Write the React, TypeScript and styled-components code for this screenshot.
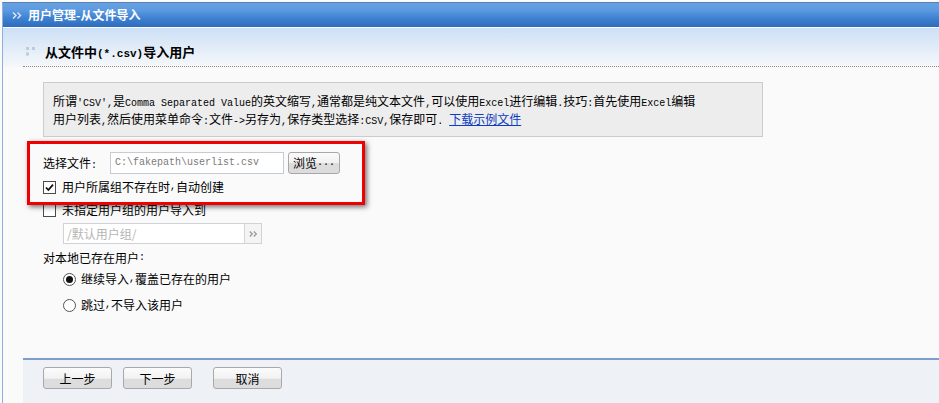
import React from "react";
import styled, { createGlobalStyle } from "styled-components";

const Global = createGlobalStyle`
  html, body { margin: 0; padding: 0; background: #fafafa; }
  body {
    font-family: "Noto Sans CJK SC", "Noto Sans", sans-serif;
    font-size: 12px;
    color: #000;
  }
  #root { height: 403px; }
`;

const Page = styled.div`
  height: 403px;
  box-sizing: border-box;
  padding: 2px 0 0 2px;
  display: flex;
  overflow: hidden;
  background: #fafafa;
`;

const Window = styled.div`
  flex: 1;
  min-width: 0;
  display: flex;
  flex-direction: column;
  border-left: 1px solid #8db0dc;
  border-top: 1px solid #5f7fa8;
`;

const Header = styled.div`
  height: 24px;
  flex: none;
  display: flex;
  align-items: center;
  gap: 6px;
  padding-left: 9px;
  background: linear-gradient(#64a2e4 0%, #5d9ae0 30%, #4a8bd7 50%, #3d80cf 65%, #2e6bbe 100%);
  border-bottom: 1px solid #ffffff;
  color: #fff;
  font-weight: bold;
  font-size: 12px;
  line-height: 16px;
`;

const TitleBand = styled.div`
  flex: none;
  background: linear-gradient(#cde0f6 0%, #e3edf8 55%, #f6f8fa 100%);
`;

const TitleInner = styled.div`
  margin-left: 20px;
  height: 38px;
  box-sizing: content-box;
  border-bottom: 1px dotted #8a8a8a;
  display: flex;
  align-items: flex-end;
  gap: 9px;
  padding: 0 0 0 3px;
`;

const TitleText = styled.div`
  font-weight: bold;
  font-size: 13px;
  line-height: 16px;
  margin-bottom: 6px;
  color: #000;
`;

const TitleIcon = styled.svg`
  flex: none;
  margin-bottom: 10px;
`;

const Content = styled.div`
  flex: 1;
  padding-left: 40px;
  display: flex;
  flex-direction: column;
`;

const InfoBox = styled.div`
  margin-top: 15px;
  width: 720px;
  box-sizing: border-box;
  border: 1px solid #cccccc;
  background: #ededed;
  padding: 9px 9px 8px 9px;
  line-height: 18px;
  color: #000;
`;

const InfoLine = styled.div`
  height: 18px;
  white-space: nowrap;
`;

const Link = styled.a`
  color: #0b3cc1;
  text-decoration: underline;
  cursor: pointer;
`;

const Latin = styled.span<{ $size?: number }>`
  font-family: "Liberation Mono", "DejaVu Sans Mono", monospace;
  font-size: ${(p) => p.$size ?? 10}px;
  line-height: 1;
`;

function Mixed({ text, size }: { text: string; size?: number }) {
  const parts = text.split(/([\x20-\x7e]+)/);
  return (
    <>
      {parts.map((p, i) =>
        p === "" ? null : /^[\x20-\x7e]+$/.test(p) ? (
          <Latin key={i} $size={size}>
            {p}
          </Latin>
        ) : (
          <React.Fragment key={i}>{p}</React.Fragment>
        )
      )}
    </>
  );
}

const Form = styled.div`
  position: relative;
  display: flex;
  flex-direction: column;
`;

const Row = styled.div<{ $top: number; $h: number; $indent?: number }>`
  display: flex;
  align-items: center;
  margin-top: ${(p) => p.$top}px;
  height: ${(p) => p.$h}px;
  padding-left: ${(p) => p.$indent ?? 0}px;
  line-height: 18px;
  white-space: nowrap;
`;

const Label = styled.span`
  width: 67px;
  flex: none;
`;

const FileInput = styled.div`
  width: 174px;
  height: 22px;
  box-sizing: border-box;
  border: 1px solid #c6ccd3;
  background: #fff;
  padding-left: 4px;
  display: flex;
  align-items: center;
  color: #7a7a7a;
`;

const SmallButton = styled.div`
  margin-left: 4px;
  width: 52px;
  height: 22px;
  box-sizing: border-box;
  border: 1px solid #a8a8a8;
  border-radius: 3px;
  background: linear-gradient(#fbfbfb 0%, #f1f1f1 50%, #dcdcdc 52%, #dcdcdc 100%);
  display: flex;
  align-items: center;
  justify-content: center;
  color: #000;
`;

const CheckBox = styled.span`
  width: 13px;
  height: 13px;
  box-sizing: border-box;
  border: 1px solid #4a4a4a;
  background: #fff;
  flex: none;
  display: flex;
  align-items: center;
  justify-content: center;
  margin-right: 6px;
`;

const Radio = styled.span`
  width: 13px;
  height: 13px;
  box-sizing: border-box;
  border: 1px solid #555;
  border-radius: 50%;
  background: #fff;
  flex: none;
  display: flex;
  align-items: center;
  justify-content: center;
  margin-right: 5px;
`;

const RadioDot = styled.span`
  width: 7px;
  height: 7px;
  border-radius: 50%;
  background: #111;
`;

const GroupInput = styled.div`
  margin-left: 20px;
  width: 199px;
  height: 21px;
  box-sizing: border-box;
  border: 1px solid #cfd3d8;
  background: #fff;
  display: flex;
  align-items: stretch;
`;

const GroupText = styled.span`
  flex: 1;
  padding-left: 3px;
  display: flex;
  align-items: center;
  color: #b5b5b5;
`;

const GroupPick = styled.span`
  width: 16px;
  border-left: 1px solid #d4d4d4;
  background: #f4f4f4;
  display: flex;
  align-items: center;
  justify-content: center;
`;

const Highlight = styled.div`
  position: absolute;
  left: -16px;
  top: 4px;
  width: 338px;
  height: 64px;
  box-sizing: border-box;
  border: 3px solid #f00000;
  box-shadow: 2px 2px 5px rgba(0, 0, 0, 0.55);
  pointer-events: none;
  z-index: 2;
`;

const Footer = styled.div`
  flex: none;
  margin-left: 20px;
  height: 36px;
  border-top: 2px solid #7e9ccc;
  background: #eef2f7;
  padding: 7px 0 0 20px;
  box-sizing: content-box;
  display: flex;
  align-items: flex-start;
`;

const FooterButton = styled.div<{ $gap: number }>`
  margin-left: ${(p) => p.$gap}px;
  width: 69px;
  height: 22px;
  box-sizing: border-box;
  border: 1px solid #a9a9a9;
  border-radius: 3px;
  background: linear-gradient(#fbfbfb 0%, #f2f2f2 52%, #dddddd 54%, #dddddd 100%);
  display: flex;
  align-items: center;
  justify-content: center;
  color: #000;
  font-size: 12px;
`;

const HeaderArrows = () => (
  <svg width="10" height="7" viewBox="0 0 10 7">
    <path d="M1 0.5 L4 3.5 L1 6.5" fill="none" stroke="#dce9f8" strokeWidth="1.4" />
    <path d="M5.5 0.5 L8.5 3.5 L5.5 6.5" fill="none" stroke="#dce9f8" strokeWidth="1.4" />
  </svg>
);

const PickArrows = () => (
  <svg width="9" height="6" viewBox="0 0 9 6">
    <path d="M0.8 0.5 L3.3 3 L0.8 5.5" fill="none" stroke="#9a9a9a" strokeWidth="1.3" />
    <path d="M4.8 0.5 L7.3 3 L4.8 5.5" fill="none" stroke="#9a9a9a" strokeWidth="1.3" />
  </svg>
);

const Check = () => (
  <svg width="11" height="11" viewBox="0 0 11 11">
    <path d="M2 5.5 L4.4 8 L9 2.6" fill="none" stroke="#111" strokeWidth="1.8" />
  </svg>
);

export default function App() {
  return (
    <>
      <Global />
      <Page>
        <Window>
          <Header>
            <HeaderArrows />
            <span>用户管理-从文件导入</span>
          </Header>
          <TitleBand>
            <TitleInner>
              <TitleIcon width="10" height="9" viewBox="0 0 10 9">
                <rect x="0" y="0" width="3" height="3" fill="#bccbde" />
                <rect x="6" y="0" width="3" height="3" fill="#bccbde" />
                <rect x="0" y="5.5" width="3" height="3" fill="#bccbde" />
              </TitleIcon>
              <TitleText>
                <Mixed text="从文件中(*.csv)导入用户" size={11} />
              </TitleText>
            </TitleInner>
          </TitleBand>
          <Content>
            <InfoBox>
              <InfoLine>
                <Mixed text="所谓'CSV',是Comma Separated Value的英文缩写,通常都是纯文本文件,可以使用Excel进行编辑.技巧:首先使用Excel编辑" />
              </InfoLine>
              <InfoLine>
                <Mixed text="用户列表,然后使用菜单命令:文件->另存为,保存类型选择:CSV,保存即可. " />
                <Link>下载示例文件</Link>
              </InfoLine>
            </InfoBox>
            <Form>
              <Highlight />
              <Row $top={14} $h={23}>
                <Label>
                  <Mixed text="选择文件:" />
                </Label>
                <FileInput>
                  <Latin>C:\fakepath\userlist.csv</Latin>
                </FileInput>
                <SmallButton>
                  <Mixed text="浏览..." />
                </SmallButton>
              </Row>
              <Row $top={4} $h={18}>
                <CheckBox>
                  <Check />
                </CheckBox>
                <Mixed text="用户所属组不存在时,自动创建" />
              </Row>
              <Row $top={5} $h={18}>
                <CheckBox />
                未指定用户组的用户导入到
              </Row>
              <Row $top={4} $h={21}>
                <GroupInput>
                  <GroupText>/默认用户组/</GroupText>
                  <GroupPick>
                    <PickArrows />
                  </GroupPick>
                </GroupInput>
              </Row>
              <Row $top={5} $h={18}>
                <Mixed text="对本地已存在用户:" />
              </Row>
              <Row $top={3} $h={18} $indent={20}>
                <Radio>
                  <RadioDot />
                </Radio>
                <Mixed text="继续导入,覆盖已存在的用户" />
              </Row>
              <Row $top={8} $h={18} $indent={20}>
                <Radio />
                <Mixed text="跳过,不导入该用户" />
              </Row>
            </Form>
          </Content>
          <Footer>
            <FooterButton $gap={0}>上一步</FooterButton>
            <FooterButton $gap={11}>下一步</FooterButton>
            <FooterButton $gap={21}>取消</FooterButton>
          </Footer>
        </Window>
      </Page>
    </>
  );
}
